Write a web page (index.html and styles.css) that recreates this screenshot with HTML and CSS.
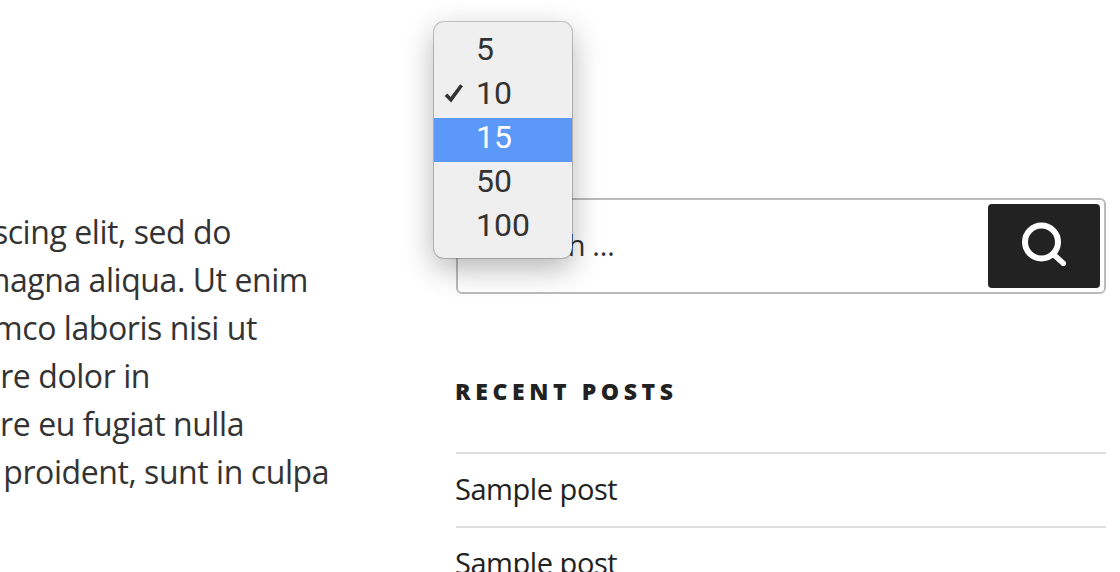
FILE: index.html
```html
<!DOCTYPE html>
<html lang="en">
<head>
    <meta charset="UTF-8">
    <title>Sample page</title>
    <link rel="stylesheet" href="styles.css">
</head>
<body>
    <div class="page">
        <main class="content">
            <div class="entry">
                <span class="line">Lorem ipsum dolor sit amet, consectetur adipiscing elit, sed do</span>
                <span class="line">eiusmod tempor incididunt ut labore et dolore magna aliqua. Ut enim</span>
                <span class="line">ad minim veniam, quis nostrud exercitation ullamco laboris nisi ut</span>
                <span class="line">aliquip ex ea commodo consequat. Duis aute irure dolor in</span>
                <span class="line">reprehenderit in voluptate velit esse cillum dolore eu fugiat nulla</span>
                <span class="line">pariatur. Excepteur sint occaecat cupidatat non proident, sunt in culpa</span>
            </div>
        </main>
        <aside class="sidebar">
            <form class="search-form">
                <span class="search-placeholder">Search …</span>
                <button class="search-submit" type="button" aria-label="Search">
                    <svg viewBox="0 0 44 44" width="44" height="44">
                        <circle cx="19.5" cy="20" r="16.5" fill="none" stroke="#fff" stroke-width="6"/>
                        <path d="M31 32 L41.5 41.5" fill="none" stroke="#fff" stroke-width="5.5" stroke-linecap="round"/>
                    </svg>
                </button>
            </form>
            <h2 class="widget-title">Recent Posts</h2>
            <ul class="post-list">
                <li>Sample post</li>
                <li>Sample post</li>
            </ul>
        </aside>
    </div>

    <ul class="select-menu">
        <li>5</li>
        <li>
            <svg class="check" viewBox="0 0 18 18" width="20" height="20">
                <path d="M1.8 10.5 L6.2 15 L15.8 2" fill="none" stroke="#333" stroke-width="3.2"/>
            </svg>
            10
        </li>
        <li class="highlighted">15</li>
        <li>50</li>
        <li>100</li>
    </ul>
</body>
</html>
```

FILE: styles.css
```css
html, body {
    margin: 0;
    height: 572px;
    overflow: hidden;
    background-color: #fff;
}
body {
    font-family: "Open Sans", sans-serif;
    font-size: 29px;
    letter-spacing: -0.45px;
    color: #333;
    position: relative;
}
.page {
    display: flex;
    gap: 126px;
    height: 572px;
    overflow: hidden;
}
.content {
    width: 330px;
    flex-shrink: 0;
    overflow: hidden;
    padding-top: 208px;
}
.entry {
    font-size: 32px;
    letter-spacing: -0.44px;
    line-height: 48px;
    white-space: nowrap;
}
.line {
    display: flex;
    justify-content: flex-end;
}
.line:nth-child(1) { width: 231px; }
.line:nth-child(2) { width: 308px; }
.line:nth-child(3) { width: 257px; }
.line:nth-child(4) { width: 150px; }
.line:nth-child(5) { width: 244px; }
.line:nth-child(6) { width: 329px; }
.sidebar {
    width: 650px;
    flex-shrink: 0;
    padding-top: 198px;
}
.search-form {
    display: flex;
    align-items: center;
    justify-content: space-between;
    box-sizing: border-box;
    height: 96px;
    padding: 4px 4px 4px 38px;
    border: 2px solid #bbb;
    border-radius: 6px;
}
.search-placeholder {
    margin-bottom: 4px;
}
.search-submit {
    display: flex;
    align-items: center;
    justify-content: center;
    box-sizing: border-box;
    width: 112px;
    height: 84px;
    padding: 0 0 4px 0;
    border: none;
    border-radius: 4px;
    background-color: #222;
}
.widget-title {
    margin: 86px 0 0 0;
    font-size: 23px;
    line-height: 22px;
    font-weight: 800;
    letter-spacing: 4.6px;
    text-indent: -1px;
    text-transform: uppercase;
    color: #222;
}
.post-list {
    margin: 50px 0 0 0;
    padding: 0;
    list-style: none;
    color: #222;
}
.post-list li {
    height: 72px;
    line-height: 70px;
    text-indent: -1px;
    border-top: 2px solid #ddd;
}
.select-menu {
    position: absolute;
    left: 434px;
    top: 22px;
    box-sizing: border-box;
    width: 138px;
    height: 236px;
    margin: 0;
    padding: 8px 0;
    list-style: none;
    background-color: #efefef;
    border-radius: 10px;
    box-shadow: 0 0 0 1px rgba(0,0,0,0.2), 0 10px 30px rgba(0,0,0,0.3);
    font-family: "Roboto", sans-serif;
    font-size: 32px;
    letter-spacing: 0;
    color: #333;
}
.select-menu li {
    position: relative;
    height: 44px;
    line-height: 38px;
    padding-left: 42px;
}
.select-menu .highlighted {
    background-color: #5b98f8;
    color: #fff;
}
.check {
    position: absolute;
    left: 10px;
    top: 9px;
}
```
